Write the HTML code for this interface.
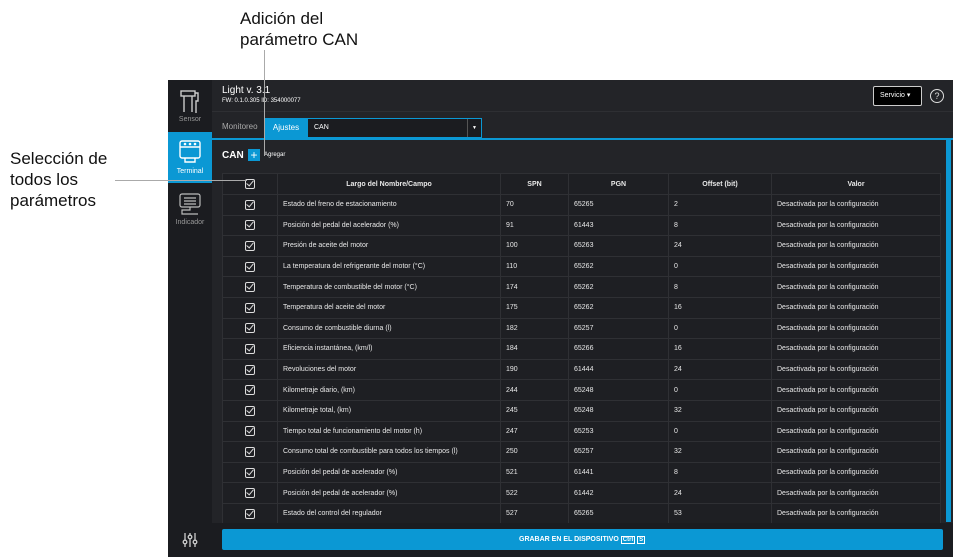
<!DOCTYPE html>
<html><head><meta charset="utf-8"><style>
*{margin:0;padding:0;box-sizing:border-box}
body{width:955px;height:557px;background:#fff;position:relative;overflow:hidden;font-family:"Liberation Sans",sans-serif}
.ann{position:absolute;font-size:17px;color:#111;line-height:21px}
.app{position:absolute;left:168px;top:80px;width:785px;height:477px;background:#232428}
.side{position:absolute;left:0;top:0;width:44px;height:477px;background:#1b1c20}
.si{position:absolute;left:0;width:44px;text-align:center;font-size:7px;color:#999}
.hdr{position:absolute;left:44px;top:0;right:0;height:32px;border-bottom:1px solid #2e2f33}
.tabs{position:absolute;left:44px;top:32px;right:0;height:28px;border-bottom:2px solid #0b98d4}
.t{color:#fff;position:absolute;font-size:7px}
table{position:absolute;left:54px;top:93px;border-collapse:collapse;font-size:7px;color:#e8e8e8}
td{border:1px solid #2f3034;height:20.6px;padding:0 5px;background:#1e1f23;vertical-align:middle}
th{border:1px solid #2f3034;height:21px;font-weight:bold;background:#1e1f23}
.cb{width:10px;height:10px;border:1.3px solid #ddd;border-radius:2px;margin:auto;position:relative}
.cb:after{content:"";position:absolute;left:2px;top:-1px;width:3px;height:6px;border:solid #ddd;border-width:0 1.3px 1.3px 0;transform:rotate(40deg)}
</style></head><body>
<div class="app">
 <div class="side">
  <svg style="position:absolute;left:11px;top:9px" width="22" height="26" viewBox="0 0 22 26" fill="none" stroke="#ccc" stroke-width="1.4"><rect x="2" y="2" width="14" height="5"/><path d="M5 7v16M13 7v16M16 4h3v8h-2v12"/></svg>
  <div class="si" style="top:36px">Sensor</div>
  <div style="position:absolute;left:0;top:52px;width:44px;height:51px;background:#0b98d4"></div>
  <svg style="position:absolute;left:11px;top:60px" width="22" height="24" viewBox="0 0 22 24" fill="none" stroke="#fff" stroke-width="1.4"><rect x="1" y="1" width="20" height="17" rx="2"/><path d="M1 7h20M6 18v4h10v-4"/><circle cx="6" cy="4" r=".6"/><circle cx="11" cy="4" r=".6"/><circle cx="16" cy="4" r=".6"/></svg>
  <div class="si" style="top:88px;color:#fff">Terminal</div>
  <svg style="position:absolute;left:11px;top:113px" width="22" height="24" viewBox="0 0 22 24" fill="none" stroke="#bbb" stroke-width="1.2"><rect x="1" y="1" width="20" height="13" rx="2"/><path d="M5 5h12M5 8h12M5 11h12M11 14v3H3v4h16"/></svg>
  <div class="si" style="top:139px">Indicador</div>
  <svg style="position:absolute;left:14px;top:452px" width="16" height="16" viewBox="0 0 16 16" fill="none" stroke="#ccc" stroke-width="1.3"><path d="M3 1v14M8 1v14M13 1v14"/><circle cx="3" cy="10" r="1.8" fill="#1b1c20"/><circle cx="8" cy="5" r="1.8" fill="#1b1c20"/><circle cx="13" cy="10" r="1.8" fill="#1b1c20"/></svg>
 </div>
 <div class="hdr">
  <div class="t" style="left:10px;top:5px;font-size:10px">Light v. 3.1</div>
  <div class="t" style="left:10px;top:18px;font-size:6px">FW: 0.1.0.305 ID: 354000077</div>
  <div style="position:absolute;left:661px;top:6px;width:49px;height:20px;border:1px solid #ccc;border-radius:2px;background:#000;color:#fff;font-size:7px;line-height:18px;padding-left:6px">Servicio ▾</div>
  <div style="position:absolute;left:718px;top:9px;width:14px;height:14px;border:1.3px solid #ddd;border-radius:50%;color:#ddd;font-size:9px;text-align:center;line-height:12px">?</div>
 </div>
 <div class="tabs">
  <div style="position:absolute;left:10px;top:10px;font-size:8px;color:#aaa">Monitoreo</div>
  <div style="position:absolute;left:53px;top:6px;width:42px;height:20px;background:#0b98d4;color:#fff;font-size:8px;text-align:center;line-height:20px">Ajustes</div>
  <div style="position:absolute;left:95px;top:6px;width:175px;height:20px;border:1px solid #0b98d4;background:#1b1c20;color:#fff;font-size:7px;line-height:18px;padding-left:6px">CAN<span style="position:absolute;right:0;top:0;width:14px;height:18px;border-left:1px solid #555;text-align:center;font-size:5px">▼</span></div>
 </div>
 <div class="t" style="left:54px;top:70px;font-size:10px;font-weight:bold">CAN</div>
 <div style="position:absolute;left:80px;top:69px;width:12px;height:12px;background:#0b98d4;color:#fff;font-size:12px;text-align:center;line-height:12px">+</div>
 <div class="t" style="left:96px;top:72px;font-size:6px">Agregar</div>
 <table>
  <tr><th style="width:55px"><div class="cb"></div></th><th style="width:223px">Largo del Nombre/Campo</th><th style="width:68px">SPN</th><th style="width:100px">PGN</th><th style="width:103px">Offset (bit)</th><th style="width:169px">Valor</th></tr>
  <tr><td><div class="cb"></div></td><td>Estado del freno de estacionamiento</td><td>70</td><td>65265</td><td>2</td><td>Desactivada por la configuración</td></tr>
  <tr><td><div class="cb"></div></td><td>Posición del pedal del acelerador (%)</td><td>91</td><td>61443</td><td>8</td><td>Desactivada por la configuración</td></tr>
  <tr><td><div class="cb"></div></td><td>Presión de aceite del motor</td><td>100</td><td>65263</td><td>24</td><td>Desactivada por la configuración</td></tr>
  <tr><td><div class="cb"></div></td><td>La temperatura del refrigerante del motor (°C)</td><td>110</td><td>65262</td><td>0</td><td>Desactivada por la configuración</td></tr>
  <tr><td><div class="cb"></div></td><td>Temperatura de combustible del motor (°C)</td><td>174</td><td>65262</td><td>8</td><td>Desactivada por la configuración</td></tr>
  <tr><td><div class="cb"></div></td><td>Temperatura del aceite del motor</td><td>175</td><td>65262</td><td>16</td><td>Desactivada por la configuración</td></tr>
  <tr><td><div class="cb"></div></td><td>Consumo de combustible diurna (l)</td><td>182</td><td>65257</td><td>0</td><td>Desactivada por la configuración</td></tr>
  <tr><td><div class="cb"></div></td><td>Eficiencia instantánea, (km/l)</td><td>184</td><td>65266</td><td>16</td><td>Desactivada por la configuración</td></tr>
  <tr><td><div class="cb"></div></td><td>Revoluciones del motor</td><td>190</td><td>61444</td><td>24</td><td>Desactivada por la configuración</td></tr>
  <tr><td><div class="cb"></div></td><td>Kilometraje diario, (km)</td><td>244</td><td>65248</td><td>0</td><td>Desactivada por la configuración</td></tr>
  <tr><td><div class="cb"></div></td><td>Kilometraje total, (km)</td><td>245</td><td>65248</td><td>32</td><td>Desactivada por la configuración</td></tr>
  <tr><td><div class="cb"></div></td><td>Tiempo total de funcionamiento del motor (h)</td><td>247</td><td>65253</td><td>0</td><td>Desactivada por la configuración</td></tr>
  <tr><td><div class="cb"></div></td><td>Consumo total de combustible para todos los tiempos (l)</td><td>250</td><td>65257</td><td>32</td><td>Desactivada por la configuración</td></tr>
  <tr><td><div class="cb"></div></td><td>Posición del pedal de acelerador (%)</td><td>521</td><td>61441</td><td>8</td><td>Desactivada por la configuración</td></tr>
  <tr><td><div class="cb"></div></td><td>Posición del pedal de acelerador (%)</td><td>522</td><td>61442</td><td>24</td><td>Desactivada por la configuración</td></tr>
  <tr><td><div class="cb"></div></td><td>Estado del control del regulador</td><td>527</td><td>65265</td><td>53</td><td>Desactivada por la configuración</td></tr>
 </table>
 <div style="position:absolute;left:778px;top:60px;width:5px;height:382px;background:#0b98d4"></div>
 <div style="position:absolute;left:44px;top:443px;right:0;height:34px;background:#1b1c20"></div>
 <div style="position:absolute;left:54px;top:449px;width:721px;height:21px;background:#0b98d4;border-radius:2px;color:#fff;font-size:7px;font-weight:bold;line-height:21px;padding-left:297px">GRABAR EN EL DISPOSITIVO <span style="border:1px solid #fff;padding:0 1px;font-size:6px">Ctrl</span> <span style="border:1px solid #fff;padding:0 1px;font-size:6px">S</span></div>
</div>
<div class="ann" style="left:240px;top:8px">Adición del<br>parámetro CAN</div>
<div style="position:absolute;left:264px;top:50px;width:1px;height:105px;background:#aaa"></div>
<div class="ann" style="left:10px;top:148px">Selección de<br>todos los<br>parámetros</div>
<div style="position:absolute;left:115px;top:180px;width:132px;height:1px;background:#aaa"></div>
</body></html>
